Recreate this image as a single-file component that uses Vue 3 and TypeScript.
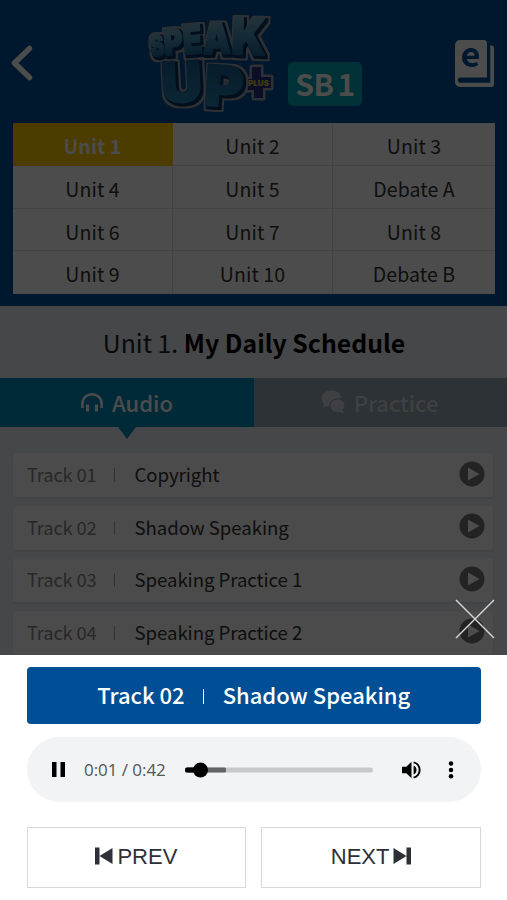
<script setup lang="ts">
interface Track {
  no: string
  title: string
}

interface LogoLetter {
  char: string
  x: number
  y: number
  size: number
  rotate: number
  width: number
  tone: 'light' | 'deep'
}

const units: string[] = [
  'Unit 1', 'Unit 2', 'Unit 3',
  'Unit 4', 'Unit 5', 'Debate A',
  'Unit 6', 'Unit 7', 'Unit 8',
  'Unit 9', 'Unit 10', 'Debate B',
]
const currentUnit = 'Unit 1'

const tracks: Track[] = [
  { no: 'Track 01', title: 'Copyright' },
  { no: 'Track 02', title: 'Shadow Speaking' },
  { no: 'Track 03', title: 'Speaking Practice 1' },
  { no: 'Track 04', title: 'Speaking Practice 2' },
]
const playing: Track = tracks[1]

const letters: LogoLetter[] = [
  { char: 'S', x: 9, y: 46, size: 30, rotate: -10, width: 14, tone: 'light' },
  { char: 'P', x: 22, y: 44.5, size: 36, rotate: -6, width: 19, tone: 'light' },
  { char: 'E', x: 41, y: 43.5, size: 40, rotate: -5, width: 19, tone: 'light' },
  { char: 'A', x: 60, y: 43, size: 43, rotate: -1, width: 28, tone: 'light' },
  { char: 'K', x: 88, y: 43, size: 51, rotate: 2, width: 34, tone: 'light' },
  { char: 'U', x: 19, y: 92, size: 56, rotate: -3, width: 41, tone: 'deep' },
  { char: 'P', x: 60, y: 94, size: 56, rotate: 4, width: 39, tone: 'deep' },
]
</script>

<template>
  <div class="screen">
    <header class="top">
      <div class="bar">
        <svg class="back" viewBox="0 0 24 38">
          <path d="M18.5 4.5 3.5 19 18.5 33.5" />
        </svg>
        <div class="brand">
          <svg class="logo" viewBox="0 0 134 104">
            <defs>
              <linearGradient id="light" x1="0" y1="0" x2="0" y2="1">
                <stop offset="0.2" stop-color="#76a8c0" />
                <stop offset="0.5" stop-color="#4590b4" />
                <stop offset="0.8" stop-color="#1c6796" />
              </linearGradient>
              <linearGradient id="deep" x1="0" y1="0" x2="0" y2="1">
                <stop offset="0.2" stop-color="#1a5f94" />
                <stop offset="0.8" stop-color="#2580ae" />
              </linearGradient>
              <filter id="block" x="-0.15" y="-0.15" width="1.3" height="1.3" color-interpolation-filters="sRGB">
                <feMorphology in="SourceAlpha" operator="dilate" radius="0.5" result="fat" />
                <feOffset in="fat" dx="1.5" dy="1.5" result="side" />
                <feFlood flood-color="#06305c" />
                <feComposite in2="side" operator="in" result="depth" />
                <feMorphology in="side" operator="dilate" radius="2" result="wide" />
                <feGaussianBlur in="wide" stdDeviation="0.7" result="soft" />
                <feFlood flood-color="#9aa2ad" />
                <feComposite in2="soft" operator="in" result="halo" />
                <feMerge>
                  <feMergeNode in="halo" />
                  <feMergeNode in="depth" />
                  <feMergeNode in="SourceGraphic" />
                </feMerge>
              </filter>
            </defs>
            <path class="cross" d="M109 56h9v10h10v11h-8v10h-9v-8h-9v-11h7z" />
            <g class="face">
              <text
                v-for="(l, i) in letters" :key="i" :class="l.tone" :font-size="l.size" :textLength="l.width"
                lengthAdjust="spacingAndGlyphs"
                :transform="`translate(${l.x} ${l.y}) rotate(${l.rotate})`"
              >{{ l.char }}</text>
            </g>
            <text class="plus" x="105" y="74.500" font-size="8" textLength="21" lengthAdjust="spacingAndGlyphs">PLUS</text>
          </svg>
          <span class="level">SB 1</span>
        </div>
        <svg class="ebook" viewBox="0 0 40 48">
          <path class="cover" d="M5 0H29a3 3 0 0 1 3 3V37.500H5.500a2.500 2.500 0 0 0 0 5.200H35.300V5.500h1.200A2.500 2.500 0 0 1 39 8V44a3 3 0 0 1-3 3H5a5 5 0 0 1-5-5V5a5 5 0 0 1 5-5Z" />
          <text x="15.500" y="27" text-anchor="middle">e</text>
        </svg>
      </div>
      <nav class="units">
        <a v-for="u in units" :key="u" class="unit" :class="{ active: u === currentUnit }">{{ u }}</a>
      </nav>
    </header>

    <h1 class="heading">Unit 1.&nbsp;<b>My Daily Schedule</b></h1>

    <div class="tabs">
      <div class="tab on">
        <svg class="phones" viewBox="0 0 22 20">
          <path class="band" d="M1.400 15V10.500a9.600 9.300 0 0 1 19.200 0V15" />
          <path class="band cup" d="M6.500 11.500v7M15.500 11.500v7" />
        </svg>
        <span>Audio</span>
      </div>
      <div class="tab off">
        <svg class="chat" viewBox="0 0 24 24">
          <path d="M10.500.500C16 .500 20 3.600 20.500 8 13 7.500 7.500 11.500 8 16.500L5.500 16 1.500 17.500 3 13.500C1.200 12 .500 10.300.500 8.500.500 4 5 .500 10.500.500Z" />
          <path d="M16.500 9.500c4.200 0 7 2.700 7 6 0 1.700-.8 3.100-1.800 4.200l1.300 3.600-3.900-1.400c-5 1.200-9.600-1.700-9.600-5.900 0-3.600 3-6.500 7-6.500Z" />
        </svg>
        <span>Practice</span>
      </div>
    </div>

    <ul class="tracks">
      <li v-for="t in tracks" :key="t.no" class="track">
        <span class="no">{{ t.no }}</span>
        <i class="rule"></i>
        <span class="name">{{ t.title }}</span>
        <svg class="play" viewBox="0 0 26 26">
          <circle cx="13" cy="13" r="12.500" />
          <path d="M9 6.500v13L20.500 13z" />
        </svg>
      </li>
    </ul>

    <div class="dim"></div>

    <section class="sheet">
      <svg class="close" viewBox="0 0 40 40">
        <path d="M1 1 39 39M39 1 1 39" />
      </svg>
      <div class="now">
        <span>{{ playing.no }}</span>
        <i class="rule"></i>
        <span>{{ playing.title }}</span>
      </div>
      <div class="player">
        <svg class="pause" viewBox="0 0 13 15"><path d="M0 0h4.500v15H0zM8.500 0H13v15H8.500z" /></svg>
        <span class="time">0:01 / 0:42</span>
        <svg class="seek" viewBox="0 0 188 16">
          <rect class="rail" x="0" y="5.500" width="188" height="5" rx="2.500" />
          <rect class="buffer" x="0" y="5.500" width="41" height="5" rx="1.500" />
          <rect class="played" x="0" y="5.500" width="15" height="5" rx="2.500" />
          <circle cx="15.500" cy="8" r="7.500" />
        </svg>
        <svg class="volume" viewBox="0 0 20 18">
          <path d="M0 5.700h4.300L9.500.700v16.600L4.300 12.300H0zM11.600 4.600a4.800 4.800 0 0 1 0 8.800z" />
          <path class="wave" d="M11.600 1.400a7.800 7.800 0 0 1 0 15.200" />
        </svg>
        <svg class="more" viewBox="0 0 6 18">
          <circle cx="3" cy="2.500" r="2.250" /><circle cx="3" cy="9" r="2.250" /><circle cx="3" cy="15.300" r="2.250" />
        </svg>
      </div>
      <div class="controls">
        <button class="step">
          <svg viewBox="0 0 18 18"><path d="M0 .500h4.500v17H0zM17.500 1v16L4.500 9z" /></svg>
          <span>PREV</span>
        </button>
        <button class="step next">
          <span>NEXT</span>
          <svg viewBox="0 0 18 18"><path d="M13.500.500H18v17h-4.500zM.500 1v16L13.500 9z" /></svg>
        </button>
      </div>
    </section>
  </div>
</template>

<style>
body {
  margin: 0;
  background: #fff;
}
</style>

<style scoped>
.screen {
  position: relative;
  width: 507px;
  height: 900px;
  overflow: hidden;
  background: #eaeef2;
  font-family: "Noto Sans CJK KR", "Noto Sans", sans-serif;
  color: #333;
}
svg {
  display: block;
  flex: none;
  overflow: visible;
}
.top {
  box-sizing: border-box;
  height: 306px;
  background: #005098;
}
.bar {
  display: flex;
  height: 123px;
}
.back {
  width: 24px;
  height: 38px;
  margin: 44px 0 0 11px;
  fill: none;
  stroke: #fff;
  stroke-width: 5.500;
  stroke-linecap: round;
  stroke-linejoin: round;
}
.brand {
  display: flex;
  margin-left: 108px;
}
.logo {
  width: 134px;
  height: 104px;
  margin-top: 11px;
  font-family: "Inter", "DejaVu Sans", sans-serif;
  font-weight: 900;
}
.face {
  stroke-width: 2;
  stroke-linejoin: round;
  filter: url(#block);
}
.light {
  fill: url(#light);
  stroke: url(#light);
}
.deep {
  fill: url(#deep);
  stroke: url(#deep);
}
.cross {
  fill: #2b2f86;
  stroke: #9aa2ad;
  stroke-width: 5;
  stroke-linejoin: round;
  paint-order: stroke;
}
.plus {
  fill: #d8c43c;
}
.level {
  width: 74px;
  height: 44px;
  margin: 62px 0 0 11px;
  border-radius: 5px;
  background: #00a5b5;
  color: #fff;
  font-size: 30px;
  font-weight: 700;
  line-height: 43px;
  letter-spacing: -0.500px;
  word-spacing: -2px;
  text-align: center;
  white-space: nowrap;
}
.ebook {
  width: 40px;
  height: 48px;
  margin: 40px 0 0 93px;
}
.cover {
  fill: #fff;
}
.ebook text {
  fill: #005098;
  font-size: 34px;
  font-weight: 700;
}
.units {
  display: grid;
  grid-template-columns: 160px 160px 162px;
  grid-template-rows: repeat(4, 42.750px);
  width: 482px;
  margin-left: 13px;
  background: #fff;
}
.unit {
  box-sizing: border-box;
  border-right: 1px solid #e2e2e2;
  border-bottom: 1px solid #e2e2e2;
  font-size: 19.500px;
  line-height: 46px;
  letter-spacing: 0.100px;
  text-align: center;
}
.unit:nth-child(3n) {
  border-right: 0;
}
.unit:nth-child(n + 10) {
  border-bottom: 0;
}
.unit.active {
  background: #ffc800;
  border-color: #ffc800;
  color: #fff;
  font-weight: 700;
}
.heading {
  display: flex;
  justify-content: center;
  height: 72px;
  margin: 0;
  padding-left: 1px;
  color: #222;
  font-size: 24.800px;
  font-weight: 400;
  line-height: 73px;
}
.heading b {
  color: #000;
  font-weight: 700;
}
.tabs {
  display: grid;
  grid-template-columns: 254px 253px;
  height: 49px;
}
.tab {
  position: relative;
  display: flex;
  align-items: center;
  justify-content: center;
  gap: 9px;
  color: #fff;
  font-size: 22px;
  font-weight: 500;
  line-height: 48px;
}
.tab span {
  margin-top: -1px;
}
.tab.on {
  background: #008cbb;
}
.tab.on::after {
  position: absolute;
  top: 49px;
  left: 118px;
  border: 9.500px solid transparent;
  border-top: 12px solid #008cbb;
  border-bottom: 0;
  content: "";
}
.tab.off {
  padding-right: 2px;
  background: #93a9b1;
  color: #cfd8dc;
}
.phones {
  width: 22px;
  height: 20px;
}
.band {
  fill: none;
  stroke: #fff;
  stroke-width: 2.500;
}
.cup {
  stroke-width: 3;
}
.chat {
  width: 24px;
  height: 24px;
  margin-top: -2px;
  fill: #cfd8dc;
}
.tracks {
  display: flex;
  flex-direction: column;
  gap: 8.500px;
  margin: 0;
  padding: 26px 13px 0;
  list-style: none;
}
.track {
  display: flex;
  align-items: center;
  box-sizing: border-box;
  width: 480px;
  height: 44px;
  padding: 0 8px 0 14px;
  border-radius: 3px;
  background: #fbfbfb;
  box-shadow: 0 1px 2px #d2d6da;
  font-size: 18.600px;
  line-height: 42px;
  white-space: nowrap;
}
.track span {
  margin-top: -2px;
}
.no {
  width: 87px;
  color: #888;
  font-size: 18.300px;
  letter-spacing: -0.150px;
}
.name {
  letter-spacing: -0.050px;
}
.track .rule {
  width: 1px;
  height: 14px;
  margin-right: 19.500px;
  background: #aaa;
}
.play {
  width: 26px;
  height: 26px;
  margin: -3px 0 0 auto;
  fill: #777;
}
.play path {
  fill: #fff;
}
.dim {
  position: absolute;
  inset: 0;
  background: rgba(0, 0, 0, 0.700);
}
.sheet {
  position: absolute;
  top: 654.500px;
  left: 0;
  box-sizing: border-box;
  width: 507px;
  height: 246px;
  padding: 12px 26px 0 26.500px;
  background: #fff;
}
.close {
  position: absolute;
  top: -56px;
  left: 455px;
  width: 40px;
  height: 40px;
  fill: none;
  stroke: #d8d8d8;
  stroke-width: 1.400;
}
.now {
  display: flex;
  align-items: center;
  justify-content: center;
  height: 57.500px;
  border-radius: 4px;
  background: #004f96;
  color: #fff;
  font-size: 22px;
  font-weight: 500;
  line-height: 55px;
}
.now span {
  margin-top: -2px;
}
.now .rule {
  width: 1px;
  height: 15px;
  margin: 2px 18.500px 0;
  background: #fff;
}
.player {
  display: flex;
  align-items: center;
  box-sizing: border-box;
  height: 65px;
  margin-top: 13px;
  padding-left: 25.500px;
  border-radius: 33px;
  background: #f1f3f4;
}
.pause {
  width: 13px;
  height: 15px;
}
.time {
  width: 101px;
  margin-left: 19px;
  color: #555;
  font-family: "Open Sans", "Noto Sans", sans-serif;
  font-size: 17px;
  letter-spacing: -0.050px;
  white-space: nowrap;
}
.seek {
  width: 188px;
  height: 16px;
}
.rail {
  fill: #c6c8c9;
}
.buffer {
  fill: #636465;
}
.volume {
  width: 20px;
  height: 18px;
  margin-left: 29px;
}
.wave {
  fill: none;
  stroke: #000;
  stroke-width: 2;
}
.more {
  width: 6px;
  height: 18px;
  margin-left: 26px;
}
.controls {
  display: grid;
  grid-template-columns: 1fr 1fr;
  gap: 15px;
  margin-top: 25px;
}
.step {
  display: flex;
  align-items: center;
  justify-content: center;
  gap: 4px;
  box-sizing: border-box;
  height: 61px;
  padding: 0;
  border: 1.500px solid #d8d8d8;
  background: #fff;
  color: #2e3038;
  font-family: "Liberation Sans", Arial, sans-serif;
  font-size: 22px;
}
.step span {
  margin-top: -2px;
}
.step svg {
  width: 18px;
  height: 18px;
  margin-top: -3px;
  fill: #2e3038;
}
</style>
